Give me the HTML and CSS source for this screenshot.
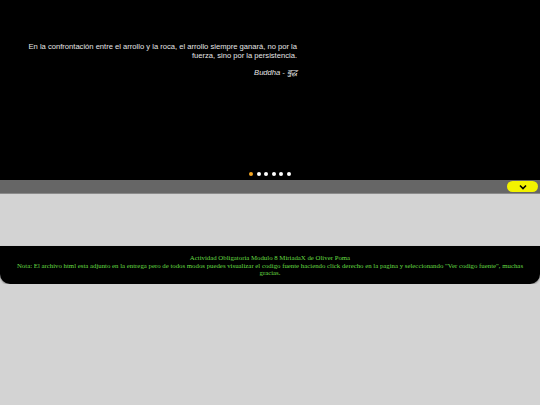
FILE: index.html
```html
<!DOCTYPE html>
<html>
<head>
<meta charset="utf-8">
<link rel="stylesheet" href="styles.css">
</head>
<body>
<div class="slider">
  <div class="quote">
    <p class="text">En la confrontación entre el arrollo y la roca, el arrollo siempre ganará, no por la fuerza, sino por la persistencia.</p>
    <p class="author">Buddha - बुद्ध</p>
  </div>
  <div class="dots">
    <span class="dot active"></span><span class="dot"></span><span class="dot"></span><span class="dot"></span><span class="dot"></span><span class="dot"></span>
  </div>
</div>
<div class="bar">
  <button class="toggle"><svg width="8" height="6" viewBox="0 0 8 6"><path d="M1 1.5 L4 4.5 L7 1.5" fill="none" stroke="#000" stroke-width="1.6"/></svg></button>
</div>
<div class="content"></div>
<footer class="footer">
  <p>Actividad Obligatoria Modulo 8 MiriadaX de Oliver Poma</p>
  <p>Nota: El archivo html esta adjunto en la entrega pero de todos modos puedes visualizar el codigo fuente haciendo click derecho en la pagina y seleccionando "Ver codigo fuente", muchas gracias.</p>
</footer>
</body>
</html>
```
FILE: styles.css
```css
html, body {
  margin: 0;
  padding: 0;
  background: #d3d3d3;
}
.slider {
  background: #000;
  height: 180px;
  display: flex;
  flex-direction: column;
}
.quote {
  width: 276px;
  margin: 42px 0 0 21px;
  text-align: right;
  font-family: "Liberation Sans", Arial, sans-serif;
  font-size: 7.6px;
  line-height: 9px;
  color: #e6e6e6;
}
.quote p { margin: 0; }
.quote .author {
  margin-top: 8px;
  font-style: italic;
  font-family: "Liberation Sans", "DejaVu Sans", sans-serif;
}
.dots {
  margin-top: auto;
  margin-bottom: 4px;
  display: flex;
  justify-content: center;
  gap: 3.6px;
}
.dot {
  width: 4px;
  height: 4px;
  border-radius: 50%;
  background: #fff;
}
.dot.active { background: #f5a623; }
.bar {
  background: #666;
  height: 13px;
  display: flex;
  justify-content: flex-end;
  align-items: center;
  padding-right: 2px;
  border-bottom: 1px solid #8a8a8a;
}
.toggle {
  width: 31px;
  height: 11px;
  border: none;
  border-radius: 6px;
  background: #f2f200;
  padding: 0;
  display: flex;
  align-items: center;
  justify-content: center;
}
.content {
  height: 52px;
}
.footer {
  background: #000;
  border-radius: 0 0 10px 10px;
  box-shadow: 0 1px 2px rgba(0,0,0,0.4);
  padding: 8px 12px 7px;
  text-align: center;
  font-family: "Liberation Serif", "Times New Roman", serif;
  font-size: 6.8px;
  line-height: 7.6px;
  color: #66dd44;
}
.footer p { margin: 0; }
```
